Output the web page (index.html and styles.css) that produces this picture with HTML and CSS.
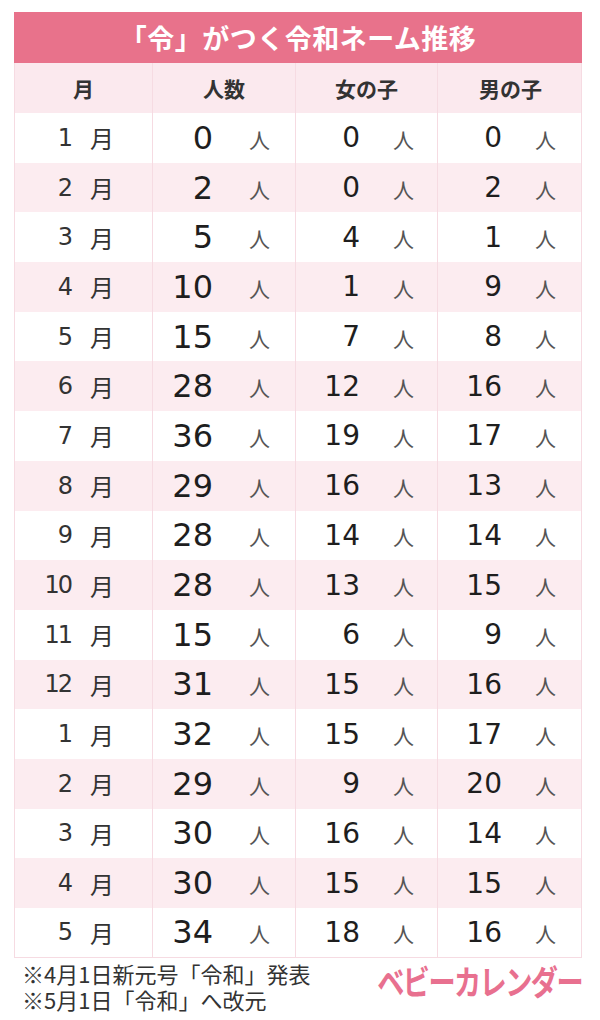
FILE: index.html
```html
<!DOCTYPE html>
<html lang="ja">
<head>
<meta charset="utf-8">
<link rel="stylesheet" href="styles.css">
</head>
<body>
<div class="page">
  <div class="table">
    <div class="title">「令」がつく令和ネーム推移</div>
    <div class="row head">
      <div class="cell">月</div>
      <div class="cell">人数</div>
      <div class="cell">女の子</div>
      <div class="cell">男の子</div>
    </div>
    <div class="row"><div class="cell m"><span class="mn">1</span><span class="mk">月</span></div><div class="cell d big"><span class="n">0</span><span class="p">人</span></div><div class="cell d"><span class="n">0</span><span class="p">人</span></div><div class="cell d"><span class="n">0</span><span class="p">人</span></div></div>
    <div class="row alt"><div class="cell m"><span class="mn">2</span><span class="mk">月</span></div><div class="cell d big"><span class="n">2</span><span class="p">人</span></div><div class="cell d"><span class="n">0</span><span class="p">人</span></div><div class="cell d"><span class="n">2</span><span class="p">人</span></div></div>
    <div class="row"><div class="cell m"><span class="mn">3</span><span class="mk">月</span></div><div class="cell d big"><span class="n">5</span><span class="p">人</span></div><div class="cell d"><span class="n">4</span><span class="p">人</span></div><div class="cell d"><span class="n">1</span><span class="p">人</span></div></div>
    <div class="row alt"><div class="cell m"><span class="mn">4</span><span class="mk">月</span></div><div class="cell d big"><span class="n">10</span><span class="p">人</span></div><div class="cell d"><span class="n">1</span><span class="p">人</span></div><div class="cell d"><span class="n">9</span><span class="p">人</span></div></div>
    <div class="row"><div class="cell m"><span class="mn">5</span><span class="mk">月</span></div><div class="cell d big"><span class="n">15</span><span class="p">人</span></div><div class="cell d"><span class="n">7</span><span class="p">人</span></div><div class="cell d"><span class="n">8</span><span class="p">人</span></div></div>
    <div class="row alt"><div class="cell m"><span class="mn">6</span><span class="mk">月</span></div><div class="cell d big"><span class="n">28</span><span class="p">人</span></div><div class="cell d"><span class="n">12</span><span class="p">人</span></div><div class="cell d"><span class="n">16</span><span class="p">人</span></div></div>
    <div class="row"><div class="cell m"><span class="mn">7</span><span class="mk">月</span></div><div class="cell d big"><span class="n">36</span><span class="p">人</span></div><div class="cell d"><span class="n">19</span><span class="p">人</span></div><div class="cell d"><span class="n">17</span><span class="p">人</span></div></div>
    <div class="row alt"><div class="cell m"><span class="mn">8</span><span class="mk">月</span></div><div class="cell d big"><span class="n">29</span><span class="p">人</span></div><div class="cell d"><span class="n">16</span><span class="p">人</span></div><div class="cell d"><span class="n">13</span><span class="p">人</span></div></div>
    <div class="row"><div class="cell m"><span class="mn">9</span><span class="mk">月</span></div><div class="cell d big"><span class="n">28</span><span class="p">人</span></div><div class="cell d"><span class="n">14</span><span class="p">人</span></div><div class="cell d"><span class="n">14</span><span class="p">人</span></div></div>
    <div class="row alt"><div class="cell m"><span class="mn">10</span><span class="mk">月</span></div><div class="cell d big"><span class="n">28</span><span class="p">人</span></div><div class="cell d"><span class="n">13</span><span class="p">人</span></div><div class="cell d"><span class="n">15</span><span class="p">人</span></div></div>
    <div class="row"><div class="cell m"><span class="mn">11</span><span class="mk">月</span></div><div class="cell d big"><span class="n">15</span><span class="p">人</span></div><div class="cell d"><span class="n">6</span><span class="p">人</span></div><div class="cell d"><span class="n">9</span><span class="p">人</span></div></div>
    <div class="row alt"><div class="cell m"><span class="mn">12</span><span class="mk">月</span></div><div class="cell d big"><span class="n">31</span><span class="p">人</span></div><div class="cell d"><span class="n">15</span><span class="p">人</span></div><div class="cell d"><span class="n">16</span><span class="p">人</span></div></div>
    <div class="row"><div class="cell m"><span class="mn">1</span><span class="mk">月</span></div><div class="cell d big"><span class="n">32</span><span class="p">人</span></div><div class="cell d"><span class="n">15</span><span class="p">人</span></div><div class="cell d"><span class="n">17</span><span class="p">人</span></div></div>
    <div class="row alt"><div class="cell m"><span class="mn">2</span><span class="mk">月</span></div><div class="cell d big"><span class="n">29</span><span class="p">人</span></div><div class="cell d"><span class="n">9</span><span class="p">人</span></div><div class="cell d"><span class="n">20</span><span class="p">人</span></div></div>
    <div class="row"><div class="cell m"><span class="mn">3</span><span class="mk">月</span></div><div class="cell d big"><span class="n">30</span><span class="p">人</span></div><div class="cell d"><span class="n">16</span><span class="p">人</span></div><div class="cell d"><span class="n">14</span><span class="p">人</span></div></div>
    <div class="row alt"><div class="cell m"><span class="mn">4</span><span class="mk">月</span></div><div class="cell d big"><span class="n">30</span><span class="p">人</span></div><div class="cell d"><span class="n">15</span><span class="p">人</span></div><div class="cell d"><span class="n">15</span><span class="p">人</span></div></div>
    <div class="row"><div class="cell m"><span class="mn">5</span><span class="mk">月</span></div><div class="cell d big"><span class="n">34</span><span class="p">人</span></div><div class="cell d"><span class="n">18</span><span class="p">人</span></div><div class="cell d"><span class="n">16</span><span class="p">人</span></div></div>
  </div>
  <div class="foot">
    <div class="notes">
      <div>※4月1日新元号「令和」発表</div>
      <div>※5月1日「令和」へ改元</div>
    </div>
    <div class="logo">ベビーカレンダー</div>
  </div>
</div>
</body>
</html>
```
FILE: styles.css
```css
html, body {
  margin: 0;
  padding: 0;
  background: #ffffff;
}
body {
  font-family: "Noto Sans CJK JP", "Noto Sans", sans-serif;
  color: #222;
}
.page {
  width: 568px;
  padding: 12px 0 0 14px;
}
.table {
  display: flex;
  flex-direction: column;
}
.title {
  height: 51px;
  background: #e8728b;
  color: #fff;
  font-weight: 700;
  font-size: 27px;
  line-height: 51px;
  text-align: center;
  letter-spacing: 0.5px;
}
.row {
  display: grid;
  grid-template-columns: 138px 143px 142px 145px;
  height: 49.7px;
  background: #fff;
  border-left: 1px solid #f6dbe2;
  border-right: 1px solid #f6dbe2;
  box-sizing: border-box;
}
.row.alt {
  background: #fcecf0;
}
.row.head {
  height: 50px;
  background: #fbe9ee;
}
.row:last-child {
  border-bottom: 1px solid #f6dbe2;
}
.cell {
  border-right: 1px solid #f6dbe2;
  display: flex;
  align-items: center;
}
.cell:last-child {
  border-right: none;
}
.head .cell {
  justify-content: center;
  font-weight: 700;
  font-size: 21px;
  color: #333;
}
.cell.m {
  display: grid;
  grid-template-columns: 58px 1fr;
  align-items: center;
  color: #333;
}
.mn {
  font-family: "DejaVu Sans", sans-serif;
  font-size: 24px;
  letter-spacing: -2px;
  text-align: right;
  padding-right: 2px;
}
.mk {
  font-size: 24px;
  padding-left: 17px;
}
.cell.d {
  display: grid;
  grid-template-columns: 64px 1fr;
  align-items: center;
}
.n {
  font-family: "DejaVu Sans", sans-serif;
  font-size: 28px;
  text-align: right;
  color: #1e1e1e;
}
.big .n {
  font-size: 32px;
}
.cell.big {
  grid-template-columns: 60px 1fr;
}
.big .p {
  padding-left: 36px;
}
.p {
  font-size: 21px;
  color: #555;
  padding-left: 33px;
  padding-top: 2px;
}
.foot {
  display: flex;
  justify-content: space-between;
  align-items: flex-start;
}
.notes {
  padding: 2px 0 0 8px;
  font-size: 22px;
  line-height: 26px;
  color: #333;
}
.logo {
  font-size: 34px;
  font-weight: 700;
  color: #e8708f;
  letter-spacing: -2px;
  line-height: 40px;
  padding-top: 3px;
  transform: scaleX(0.8);
  transform-origin: right center;
}
```
